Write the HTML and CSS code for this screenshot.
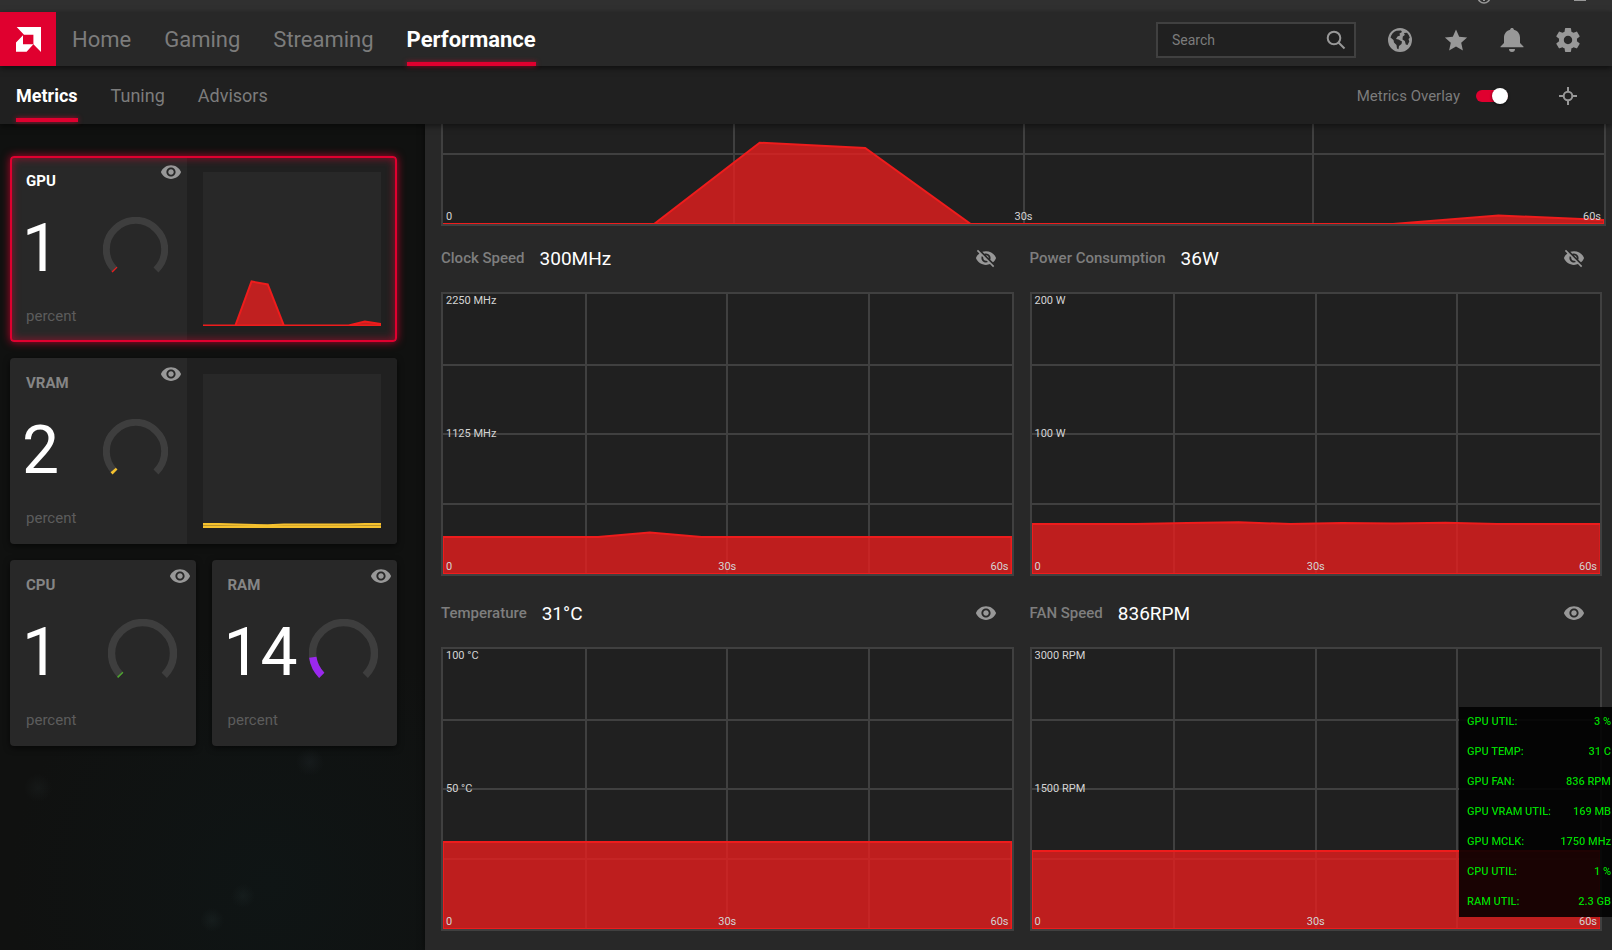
FILE: index.html
```html
<!DOCTYPE html>
<html lang="en">
<head>
<meta charset="utf-8">
<title>Performance Metrics</title>
<link rel="stylesheet" href="styles.css">
</head>
<body>
<svg class="defs" aria-hidden="true">
  <symbol id="eye" viewBox="0 0 24 24"><path d="M12 4.5C7 4.5 2.73 7.61 1 12c1.73 4.39 6 7.5 11 7.5s9.27-3.11 11-7.5c-1.73-4.39-6-7.5-11-7.5zM12 17c-2.76 0-5-2.24-5-5s2.240-5 5-5 5 2.240 5 5-2.240 5-5 5zm0-8c-1.660 0-3 1.340-3 3s1.340 3 3 3 3-1.340 3-3-1.340-3-3-3z"/></symbol>
  <symbol id="eye-off" viewBox="0 0 24 24"><path d="M12 7c2.760 0 5 2.240 5 5 0 .65-.13 1.260-.36 1.830l2.920 2.920c1.510-1.260 2.700-2.890 3.430-4.750-1.730-4.390-6-7.500-11-7.500-1.400 0-2.740.25-3.980.7l2.160 2.160C10.740 7.130 11.350 7 12 7zM2 4.270l2.280 2.280.46.46C3.080 8.300 1.780 10.020 1 12c1.730 4.390 6 7.500 11 7.500 1.550 0 3.030-.3 4.380-.84l.42.42L19.730 22 21 20.730 3.270 3 2 4.270zM7.530 9.800l1.550 1.550c-.05.21-.08.43-.08.65 0 1.660 1.340 3 3 3 .22 0 .44-.03.65-.08l1.550 1.550c-.67.33-1.410.53-2.200.53-2.760 0-5-2.240-5-5 0-.79.2-1.530.53-2.200zm4.310-.78l3.150 3.150.02-.16c0-1.660-1.340-3-3-3l-.17.01z"/></symbol>
</svg>

<div class="titlebar">
  <svg width="14" height="14" viewBox="0 0 14 14"><circle cx="7" cy="7" r="6" fill="none" stroke="currentColor" stroke-width="1.600"/><path d="M7 6v5" stroke="currentColor" stroke-width="2"/></svg>
  <svg width="14" height="14" viewBox="0 0 14 14"><path d="M1 10h12" stroke="currentColor" stroke-width="2"/></svg>
</div>

<header class="topbar">
  <a class="logo" href="#" aria-label="AMD">
    <svg width="25" height="25" viewBox="0 0 25 25" fill="#fff"><path d="M.7 0H25v25l-7.600-7.700V7.700H8z"/><path d="M7 8.300v9h10.400l-6.800 7.500H0v-9.200z"/></svg>
  </a>
  <nav class="tabs">
    <a href="#">Home</a>
    <a href="#">Gaming</a>
    <a href="#">Streaming</a>
    <a href="#" class="active" aria-current="page">Performance</a>
  </nav>
  <div class="tools">
    <label class="search">
      <input type="text" placeholder="Search" aria-label="Search">
      <svg width="20" height="20" viewBox="0 0 20 20" fill="none" stroke="currentColor" stroke-width="2"><circle cx="8" cy="8" r="6.300"/><path d="M12.500 12.500l6 6"/></svg>
    </label>
    <button aria-label="Web"><svg width="24" height="24" viewBox="0 0 24 24"><path fill-rule="evenodd" d="M12 0a12 12 0 1 0 0 24a12 12 0 0 0 0-24zM8.500 2.800L13 2.500l1 1.500-2.500 1.500.5 2-2.500 1L8 11l2.500.5 3.500 2-.5 2.500-2.500 2-.5 3.200-1.500-.7L8.500 17 6 14.500 5.500 12 2.500 9.500A10 10 0 0 1 8.500 2.800zM16 5l3-.2a10 10 0 0 1 2.800 5l-1.300 1.200.8 2.500-1.800 3.500-1.700-.5-1-3.500-2.300-1.500.3-3 2-1.500z"/></svg></button>
    <button aria-label="Favorites"><svg width="24" height="24" viewBox="0 0 24 24"><path d="M12 1.500l3.200 7.200 7.900.8-5.900 5.300 1.700 7.700-6.900-4-6.900 4 1.700-7.700L.9 9.500l7.900-.8z"/></svg></button>
    <button aria-label="Notifications"><svg width="24" height="24" viewBox="0 0 24 24"><path d="M12 0c1 0 1.800.7 1.900 1.700C17.500 2.600 20 5.700 20 9.500V15l3.500 3.500v.8H.5v-.8L4 15V9.500c0-3.800 2.500-6.900 6.100-7.800C10.200.7 11 0 12 0zM9 21h6a3 3 0 0 1-6 0z"/></svg></button>
    <button aria-label="Settings"><svg width="24" height="24" viewBox="2 2 20 20"><path d="M19.430 12.980c.04-.32.07-.64.07-.98s-.03-.66-.07-.98l2.110-1.650c.19-.15.24-.42.12-.64l-2-3.460c-.12-.22-.39-.3-.61-.22l-2.490 1c-.52-.4-1.080-.73-1.690-.98l-.38-2.650C14.460 2.180 14.250 2 14 2h-4c-.25 0-.46.18-.49.42l-.38 2.650c-.61.25-1.170.59-1.690.98l-2.490-1c-.23-.09-.49 0-.61.22l-2 3.460c-.13.22-.07.49.12.64l2.110 1.650c-.04.32-.07.65-.07.98s.03.66.07.98l-2.110 1.650c-.19.15-.24.42-.12.64l2 3.460c.12.22.39.3.61.22l2.490-1c.52.4 1.080.73 1.690.98l.38 2.650c.03.24.24.42.49.42h4c.25 0 .46-.18.49-.42l.38-2.650c.61-.25 1.170-.59 1.690-.98l2.490 1c.23.09.49 0 .61-.22l2-3.460c.12-.22.07-.49-.12-.64l-2.110-1.650zM12 15.500c-1.930 0-3.500-1.570-3.500-3.500s1.570-3.500 3.500-3.500 3.500 1.570 3.500 3.500-1.570 3.500-3.500 3.500z"/></svg></button>
  </div>
</header>

<div class="subbar">
  <nav class="subtabs">
    <a href="#" class="active" aria-current="page">Metrics</a>
    <a href="#">Tuning</a>
    <a href="#">Advisors</a>
  </nav>
  <div class="overlay-tools">
    <label class="switch">Metrics Overlay <input type="checkbox" checked></label>
    <button aria-label="Overlay position"><svg width="18" height="18" viewBox="0 0 18 18" fill="none" stroke="currentColor" stroke-width="2"><circle cx="9" cy="9" r="4.300"/><path d="M9 0v5M9 13v5M0 9h5M13 9h5"/></svg></button>
  </div>
</div>

<div class="workspace">
  <aside class="sidebar">
    <section class="card wide selected">
      <div class="stat">
        <div class="stat-head"><h2>GPU</h2><button aria-label="Toggle GPU"><svg class="eye"><use href="#eye"/></svg></button></div>
        <div class="stat-body"><span class="value">1</span>
          <svg class="gauge" viewBox="0 0 65 65"><path class="track" d="M12 53a29 29 0 1 1 41 0"/><path class="red" pathLength="100" stroke-dasharray="1 100" d="M12 53a29 29 0 1 1 41 0"/></svg></div>
        <p>percent</p>
      </div>
      <div class="mini"><svg viewBox="0 0 1100 154" preserveAspectRatio="none"><path class="area red" d="M-10 153.500H200L300 109.500 400 112.500 500 153.500H900L1000 149.500 1100 152V153.500z"/></svg></div>
    </section>

    <section class="card wide">
      <div class="stat">
        <div class="stat-head"><h2>VRAM</h2><button aria-label="Toggle VRAM"><svg class="eye"><use href="#eye"/></svg></button></div>
        <div class="stat-body"><span class="value">2</span>
          <svg class="gauge" viewBox="0 0 65 65"><path class="track" d="M12 53a29 29 0 1 1 41 0"/><path class="yellow" pathLength="100" stroke-dasharray="2 100" d="M12 53a29 29 0 1 1 41 0"/></svg></div>
        <p>percent</p>
      </div>
      <div class="mini"><svg viewBox="0 0 1100 154" preserveAspectRatio="none"><path class="area yellow" d="M-10 150H100L400 151.300 500 150.500H900L1000 150H1110V153H-10z"/></svg></div>
    </section>

    <section class="card">
      <div class="stat">
        <div class="stat-head"><h2>CPU</h2><button aria-label="Toggle CPU"><svg class="eye"><use href="#eye"/></svg></button></div>
        <div class="stat-body"><span class="value">1</span>
          <svg class="gauge large" viewBox="0 0 65 65"><path class="track" d="M12 53a29 29 0 1 1 41 0"/><path class="green" pathLength="100" stroke-dasharray="1 100" d="M12 53a29 29 0 1 1 41 0"/></svg></div>
        <p>percent</p>
      </div>
    </section>

    <section class="card">
      <div class="stat">
        <div class="stat-head"><h2>RAM</h2><button aria-label="Toggle RAM"><svg class="eye"><use href="#eye"/></svg></button></div>
        <div class="stat-body"><span class="value">14</span>
          <svg class="gauge large" viewBox="0 0 65 65"><path class="track" d="M12 53a29 29 0 1 1 41 0"/><path class="purple" pathLength="100" stroke-dasharray="14 100" d="M12 53a29 29 0 1 1 41 0"/></svg></div>
        <p>percent</p>
      </div>
    </section>
  </aside>

  <main class="charts">
    <div class="plot full">
      <svg viewBox="0 0 1100 280" preserveAspectRatio="none"><path class="area red" d="M-10 280H200L300 198.700 400 204 500 280H900L1000 271.500 1100 276V280z"/></svg>
      <div class="times"><span>0</span><span>30s</span><span>60s</span></div>
    </div>

    <div class="chart-grid">
      <section class="chart">
        <header><h3>Clock Speed</h3><strong>300MHz</strong><button aria-label="Toggle Clock Speed"><svg class="eye"><use href="#eye-off"/></svg></button></header>
        <div class="plot">
          <svg viewBox="0 0 1100 280" preserveAspectRatio="none"><path class="area red" d="M0 243H300L400 238.500 500 243H1100V280H0z"/></svg>
          <span class="max">2250 MHz</span><span class="mid">1125 MHz</span>
          <div class="times"><span>0</span><span>30s</span><span>60s</span></div>
        </div>
      </section>
      <section class="chart">
        <header><h3>Power Consumption</h3><strong>36W</strong><button aria-label="Toggle Power Consumption"><svg class="eye"><use href="#eye-off"/></svg></button></header>
        <div class="plot">
          <svg viewBox="0 0 1100 280" preserveAspectRatio="none"><path class="area red" d="M0 230L200 230 300 229 400 228.300 500 230 600 229 700 229.500 800 228.800 900 230H1100V280H0z"/></svg>
          <span class="max">200 W</span><span class="mid">100 W</span>
          <div class="times"><span>0</span><span>30s</span><span>60s</span></div>
        </div>
      </section>
      <section class="chart">
        <header><h3>Temperature</h3><strong>31°C</strong><button aria-label="Toggle Temperature"><svg class="eye"><use href="#eye"/></svg></button></header>
        <div class="plot">
          <svg viewBox="0 0 1100 280" preserveAspectRatio="none"><path class="area red" d="M0 193H1100V280H0z"/></svg>
          <span class="max">100 °C</span><span class="mid">50 °C</span>
          <div class="times"><span>0</span><span>30s</span><span>60s</span></div>
        </div>
      </section>
      <section class="chart">
        <header><h3>FAN Speed</h3><strong>836RPM</strong><button aria-label="Toggle FAN Speed"><svg class="eye"><use href="#eye"/></svg></button></header>
        <div class="plot">
          <svg viewBox="0 0 1100 280" preserveAspectRatio="none"><path class="area red" d="M0 202H1100V280H0z"/></svg>
          <span class="max">3000 RPM</span><span class="mid">1500 RPM</span>
          <div class="times"><span>0</span><span>30s</span><span>60s</span></div>
        </div>
      </section>
    </div>
  </main>
</div>

<dl class="hud">
  <div><dt>GPU UTIL:</dt><dd>3 %</dd></div>
  <div><dt>GPU TEMP:</dt><dd>31 C</dd></div>
  <div><dt>GPU FAN:</dt><dd>836 RPM</dd></div>
  <div><dt>GPU VRAM UTIL:</dt><dd>169 MB</dd></div>
  <div><dt>GPU MCLK:</dt><dd>1750 MHz</dd></div>
  <div><dt>CPU UTIL:</dt><dd>1 %</dd></div>
  <div><dt>RAM UTIL:</dt><dd>2.3 GB</dd></div>
</dl>
</body>
</html>
```

FILE: styles.css
```css
* { box-sizing: border-box; }

body {
  margin: 0;
  height: 100vh;
  display: flex;
  flex-direction: column;
  overflow: hidden;
  background: #101212;
  color: #fff;
  font-family: Roboto, "Open Sans", sans-serif;
}

h2, h3, p, dl, dd { margin: 0; }
a { color: inherit; text-decoration: none; }
svg { display: block; }
.defs { display: none; }

button {
  display: flex;
  padding: 0;
  border: 0;
  background: none;
  color: #989898;
  cursor: pointer;
}
button svg { fill: currentColor; }
.overlay-tools button svg { fill: none; }
.eye { width: 22px; height: 22px; }

/* Window title strip */
.titlebar {
  flex: none;
  height: 12px;
  display: flex;
  align-items: flex-end;
  justify-content: flex-end;
  gap: 82px;
  padding: 0 25px 8px 0;
  overflow: hidden;
  background: #303030;
  color: #989898;
}
.titlebar svg { flex: none; }

/* Primary bar */
.topbar {
  flex: none;
  position: relative;
  z-index: 3;
  height: 54px;
  display: flex;
  background: #282828;
  box-shadow: 0 2px 6px rgba(0, 0, 0, .6);
}
.logo {
  width: 56px;
  display: grid;
  place-items: center;
  padding-top: 1px;
  background: #e0002f;
}
.tabs, .subtabs { display: flex; color: #7c7c7c; }
.tabs { gap: 33px; margin-left: 16px; font-size: 22px; line-height: 56px; }
.tabs .active, .subtabs .active {
  color: #fff;
  font-weight: 700;
  position: relative;
}
.tabs .active::after, .subtabs .active::after {
  content: "";
  position: absolute;
  inset: auto 0 0;
  height: 4px;
  background: #e0002f;
  box-shadow: 0 0 5px rgba(224, 0, 47, .7);
}
.tabs a { height: 54px; }
.tools {
  margin-left: auto;
  padding: 2px 32px 0 0;
  display: flex;
  align-items: center;
  gap: 32px;
}
.search {
  width: 200px;
  height: 36px;
  display: flex;
  align-items: center;
  padding: 0 8px 0 14px;
  border: 2px solid #404040;
  background: #202020;
  color: #989898;
}
.search input {
  flex: 1;
  min-width: 0;
  padding: 0;
  border: 0;
  outline: 0;
  background: none;
  color: #fff;
  font: 14px Roboto, sans-serif;
}
.search input::placeholder { color: #7c7c7c; opacity: 1; }

/* Secondary bar */
.subbar {
  flex: none;
  position: relative;
  z-index: 2;
  height: 58px;
  display: flex;
  justify-content: space-between;
  padding: 0 35px 0 16px;
  background: #202020;
  box-shadow: 0 2px 6px rgba(0, 0, 0, .5);
}
.subtabs { gap: 33px; font-size: 18px; line-height: 60px; }
.subtabs a { height: 56px; }
.overlay-tools { display: flex; align-items: center; gap: 51px; padding-top: 2px; }
.switch {
  display: flex;
  align-items: center;
  gap: 16px;
  color: #7c7c7c;
  font-size: 15px;
}
.switch input {
  appearance: none;
  position: relative;
  width: 32px;
  height: 12px;
  margin: 0;
  border-radius: 6px;
  background: #e0002f;
}
.switch input::before {
  content: "";
  position: absolute;
  top: -2px;
  right: 0;
  width: 16px;
  height: 16px;
  border-radius: 50%;
  background: #fff;
  box-shadow: 0 1px 3px rgba(0, 0, 0, .6);
}

.workspace { flex: 1; min-height: 0; display: flex; }

/* Summary cards */
.sidebar {
  flex: none;
  width: 425px;
  display: grid;
  grid-template-columns: 1fr 1fr;
  align-content: start;
  gap: 16px;
  padding: 32px 28px 0 10px;
  background:
    radial-gradient(circle at 212px 796px, rgba(60, 80, 80, .15), transparent 12px),
    radial-gradient(circle at 243px 772px, rgba(60, 80, 80, .13), transparent 12px),
    radial-gradient(circle at 310px 638px, rgba(60, 70, 80, .15), transparent 14px),
    radial-gradient(circle at 38px 664px, rgba(60, 75, 75, .13), transparent 14px),
    radial-gradient(circle at 270px 760px, #0f1515, transparent 260px),
    #101110;
}
.card {
  position: relative;
  display: flex;
  border-radius: 4px;
  overflow: hidden;
  background: #282828;
  box-shadow: 0 2px 6px rgba(0, 0, 0, .6);
}
.wide { grid-column: span 2; }
.selected { box-shadow: 0 0 8px rgba(224, 0, 47, .8); }
.selected::after {
  content: "";
  position: absolute;
  inset: 0;
  border: 2px solid #e0002f;
  border-radius: 4px;
  box-shadow: inset 0 0 8px rgba(224, 0, 47, .6);
  pointer-events: none;
}
.stat { flex: 1; padding: 5px 5px 17px 16px; }
.wide .stat { flex: none; width: 177px; }
.stat-head {
  display: flex;
  justify-content: space-between;
  align-items: flex-start;
  height: 29px;
}
.stat h2 {
  padding-top: 11px;
  font-size: 15px;
  line-height: 18px;
  color: #858585;
}
.selected h2 { color: #fff; }
.stat-body {
  display: flex;
  justify-content: space-between;
  align-items: center;
  height: 80px;
  margin: 19px 14px 18px -4px;
}
.value { font-size: 66px; line-height: 80px; }
.gauge {
  width: 65px;
  height: 65px;
  fill: none;
  stroke-width: 7px;
}
.gauge.large { width: 69px; height: 69px; }
.gauge .track { stroke: #3e3e3e; }
.gauge .green { stroke: #4ea72e; }
.gauge .purple { stroke: #9a28ee; }
.red { stroke: #ee1c1c; }
.yellow { stroke: #f5c12e; }
.stat p { font-size: 15px; line-height: 18px; color: #5c5c5c; }
.mini { flex: 1; display: flex; padding: 16px; background: #202020; }
.mini svg { width: 100%; height: 154px; background: #282828; }

.area { stroke-width: 2px; vector-effect: non-scaling-stroke; }
.area.red { fill: rgba(230, 30, 30, .8); }
.area.yellow { fill: rgba(245, 193, 46, .7); }

/* Charts */
.charts {
  position: relative;
  flex: 1;
  min-width: 0;
  display: flex;
  flex-direction: column;
  justify-content: flex-end;
  padding: 0 10px 19px 16px;
  overflow: hidden;
  background: #282828;
  box-shadow: 0 0 6px rgba(0, 0, 0, .6);
}
.plot {
  flex: none;
  position: relative;
  height: 284px;
  border: 2px solid #404040;
  background-color: #202020;
  background-image:
    linear-gradient(#404040 0 0), linear-gradient(#404040 0 0), linear-gradient(#404040 0 0),
    linear-gradient(#404040 0 0), linear-gradient(#404040 0 0), linear-gradient(#404040 0 0);
  background-size: 2px 100%, 2px 100%, 2px 100%, 100% 2px, 100% 2px, 100% 2px;
  background-position: 25% 0, 50% 0, 75% 0, 0 25%, 0 50%, 0 75%;
  background-repeat: no-repeat;
  font-size: 11px;
  line-height: 14px;
  color: #d4d4d4;
}
.plot.full { margin-right: -4px; }
.plot svg { width: 100%; height: 100%; }
.max, .mid, .times { position: absolute; left: 3px; }
.max { top: 0; }
.mid { top: 50%; margin-top: -7px; }
.times {
  right: 3px;
  bottom: 0;
  display: grid;
  grid-template-columns: 1fr auto 1fr;
}
.times span:last-child { text-align: right; }
.chart-grid {
  display: grid;
  grid-template-columns: 1fr 1fr;
  gap: 5px 16px;
}
.chart { min-width: 0; }
.chart header {
  height: 66px;
  display: flex;
  align-items: center;
  gap: 15px;
  padding: 0 17px 2px 0;
}
.chart h3 { font-size: 15px; font-weight: 500; color: #7e7e7e; }
.chart strong { font-size: 19px; font-weight: 400; }
.chart header button { margin-left: auto; }

/* On-screen readout */
.hud {
  position: fixed;
  z-index: 5;
  right: 0;
  bottom: 33px;
  width: 153px;
  padding: 0 1px 0 8px;
  background: rgba(0, 0, 0, .87);
  color: #00d800;
  font-size: 11px;
  font-weight: 500;
  line-height: 30px;
}
.hud div { display: flex; justify-content: space-between; }
```
